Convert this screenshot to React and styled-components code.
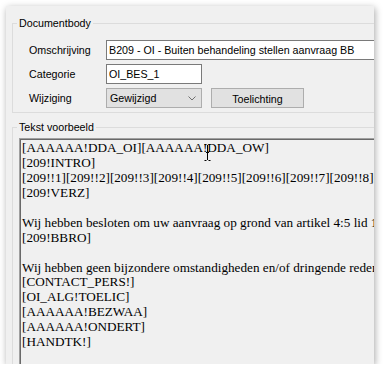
import React from "react";
import styled, { createGlobalStyle } from "styled-components";

const GlobalStyle = createGlobalStyle`
  html, body { margin: 0; padding: 0; background: #fff; }
  body { font-family: "Liberation Sans", Arial, sans-serif; }
`;

const Window = styled.div`
  margin: 6px 0 0 6px;
  width: 368px;
  height: 358px;
  background: #f0f0f0;
  overflow: hidden;
  box-shadow: 1px 2px 7px rgba(0, 0, 0, 0.35);
  font-size: 10.7px;
  color: #000;
  display: flex;
  flex-direction: column;
`;

const Group = styled.fieldset`
  flex-shrink: 0;
  margin: ${(p) => p.$top}px -80px 0 6px;
  padding: ${(p) => p.$pad};
  border: 1px solid #dcdcdc;
  min-width: 0;
  height: ${(p) => p.$height || "auto"};
  box-sizing: border-box;
`;

const Legend = styled.legend`
  margin-left: 4px;
  padding: 0 2px;
  font-size: 10.7px;
  line-height: 13px;
`;

const Rows = styled.div`
  display: flex;
  flex-direction: column;
  gap: 4px;
`;

const Row = styled.div`
  display: flex;
  align-items: center;
  height: 20px;
`;

const Label = styled.div`
  box-sizing: border-box;
  width: 93px;
  padding-left: 16px;
  flex-shrink: 0;
`;

const TextInput = styled.input`
  box-sizing: border-box;
  width: ${(p) => p.$width}px;
  height: 20px;
  margin: 0;
  padding: 0 2px;
  border: 1px solid #7a7a7a;
  background: #fff;
  font-family: "Liberation Sans", Arial, sans-serif;
  font-size: 10.7px;
  color: #000;
  outline: none;
  flex-shrink: 0;
`;

const Select = styled.div`
  box-sizing: border-box;
  width: 96px;
  height: 20px;
  display: flex;
  align-items: center;
  justify-content: space-between;
  padding: 0 5px 0 3px;
  background: #e1e1e1;
  border: 1px solid #adadad;
  flex-shrink: 0;
`;

const Button = styled.button`
  box-sizing: border-box;
  width: 93px;
  height: 20px;
  margin: 0 0 0 9px;
  padding: 2px 0 0;
  background: #e1e1e1;
  border: 1px solid #adadad;
  font-family: "Liberation Sans", Arial, sans-serif;
  font-size: 10.7px;
  color: #000;
  overflow: hidden;
  flex-shrink: 0;
`;

const Preview = styled.div`
  position: relative;
  box-sizing: border-box;
  margin: ${(p) => p.$top}px 0 0 6px;
  height: 260px;
  padding: 2px 0 0 2px;
  border-top: 1px solid #a0a0a0;
  border-left: 1px solid #a0a0a0;
  box-shadow: inset 1px 1px 0 #696969;
  background: #f0f0f0;
  font-family: "Liberation Serif", "Times New Roman", serif;
  font-size: 13.2px;
  line-height: 14.93px;
  white-space: pre;
  overflow: hidden;
`;

const Cursor = styled.svg`
  position: absolute;
  left: 184px;
  top: 5px;
`;

const previewLines = [
  "[AAAAAA!DDA_OI][AAAAAA!DDA_OW]",
  "[209!INTRO]",
  "[209!!1][209!!2][209!!3][209!!4][209!!5][209!!6][209!!7][209!!8][209!!9][209!!10]",
  "[209!VERZ]",
  "",
  "Wij hebben besloten om uw aanvraag op grond van artikel 4:5 lid 1 van de Algemene wet bestuursrecht",
  "[209!BBRO]",
  "",
  "Wij hebben geen bijzondere omstandigheden en/of dringende redenen gevonden",
  "[CONTACT_PERS!]",
  "[OI_ALG!TOELIC]",
  "[AAAAAA!BEZWAA]",
  "[AAAAAA!ONDERT]",
  "[HANDTK!]",
];

export default function App() {
  return (
    <>
      <GlobalStyle />
      <Window>
        <Group $top={11} $pad="10px 0 4px 0">
          <Legend>Documentbody</Legend>
          <Rows>
            <Row>
              <Label>Omschrijving</Label>
              <TextInput
                $width={320}
                readOnly
                value="B209 - OI - Buiten behandeling stellen aanvraag BB"
              />
            </Row>
            <Row>
              <Label>Categorie</Label>
              <TextInput $width={96} readOnly value="OI_BES_1" />
            </Row>
            <Row>
              <Label>Wijziging</Label>
              <Select>
                <span>Gewijzigd</span>
                <svg width="8" height="5" viewBox="0 0 8 5">
                  <path d="M0.5 0.5 L4 4 L7.5 0.5" fill="none" stroke="#707070" strokeWidth="1" />
                </svg>
              </Select>
              <Button>Toelichting</Button>
            </Row>
          </Rows>
        </Group>
        <Group $top={8} $pad="0" $height="300px">
          <Legend>Tekst voorbeeld</Legend>
          <Preview $top={4}>
            {previewLines.join("\n")}
            <Cursor width="7" height="17" viewBox="0 0 7 17">
              <path
                d="M0.5 0.5 H2.5 M4.5 0.5 H6.5 M3.5 1 V16 M0.5 16.5 H2.5 M4.5 16.5 H6.5 M2 8.5 H5"
                fill="none"
                stroke="#000"
                strokeWidth="1"
              />
            </Cursor>
          </Preview>
        </Group>
      </Window>
    </>
  );
}
